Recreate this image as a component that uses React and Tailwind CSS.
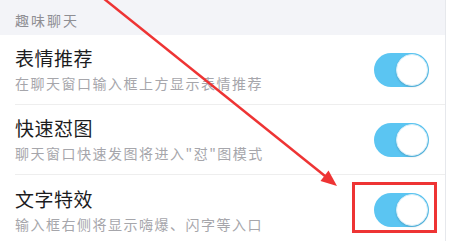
import React from "react";

const rows = [
  { title: "表情推荐", desc: "在聊天窗口输入框上方显示表情推荐" },
  { title: "快速怼图", desc: "聊天窗口快速发图将进入\"怼\"图模式" },
  { title: "文字特效", desc: "输入框右侧将显示嗨爆、闪字等入口" },
];

const Toggle = () => (
  <div className="relative h-[34px] w-[55px] shrink-0 rounded-full bg-[#5bc5f2]">
    <span className="absolute right-[1px] top-[1px] h-[32px] w-[32px] rounded-full border border-[#d6eef9] bg-white shadow-[0_1px_2px_rgba(0,0,0,0.15)]" />
  </div>
);

export default function App() {
  return (
    <div
      className="relative flex h-[241px] w-[450px] overflow-hidden bg-white"
      style={{ fontFamily: '"Noto Sans CJK SC", "Noto Sans", sans-serif' }}
    >
      <div className="flex w-[446px] flex-col border-r border-[#e6e8ec]">
        {/* section header */}
        <div className="flex h-[35px] shrink-0 items-center bg-[#f3f4f8] pl-[15px] pt-[5px] text-[14px] tracking-[2px] text-[#8e8e93]">
          趣味聊天
        </div>

        {rows.map((row, i) => (
          <div key={row.title} className="flex shrink-0 pl-[15px]">
            <div
              className={`flex h-[70px] flex-1 items-center pr-[16px] ${
                i !== rows.length - 1 ? "border-b border-[#eeeeee]" : ""
              }`}
            >
              <div className="flex flex-1 flex-col">
                <span className="text-[19px] leading-[22px] tracking-[0.5px] text-[#1c1c1e]">
                  {row.title}
                </span>
                <span className="mt-[5px] text-[14px] leading-[18px] tracking-[1.5px] text-[#a6a6ab]">
                  {row.desc}
                </span>
              </div>
              <Toggle />
            </div>
          </div>
        ))}
      </div>

      {/* annotation: arrow + highlight box */}
      <svg
        className="pointer-events-none absolute left-0 top-0"
        width="450"
        height="241"
        viewBox="0 0 450 241"
      >
        <line x1="103" y1="-2" x2="325" y2="176" stroke="#ee3434" strokeWidth="2.5" />
        <polygon points="337,186 320.5,181 328.5,170.5" fill="#ee3434" />
        <rect x="353.5" y="183.5" width="82" height="48" fill="none" stroke="#ee3434" strokeWidth="3" />
      </svg>
    </div>
  );
}
